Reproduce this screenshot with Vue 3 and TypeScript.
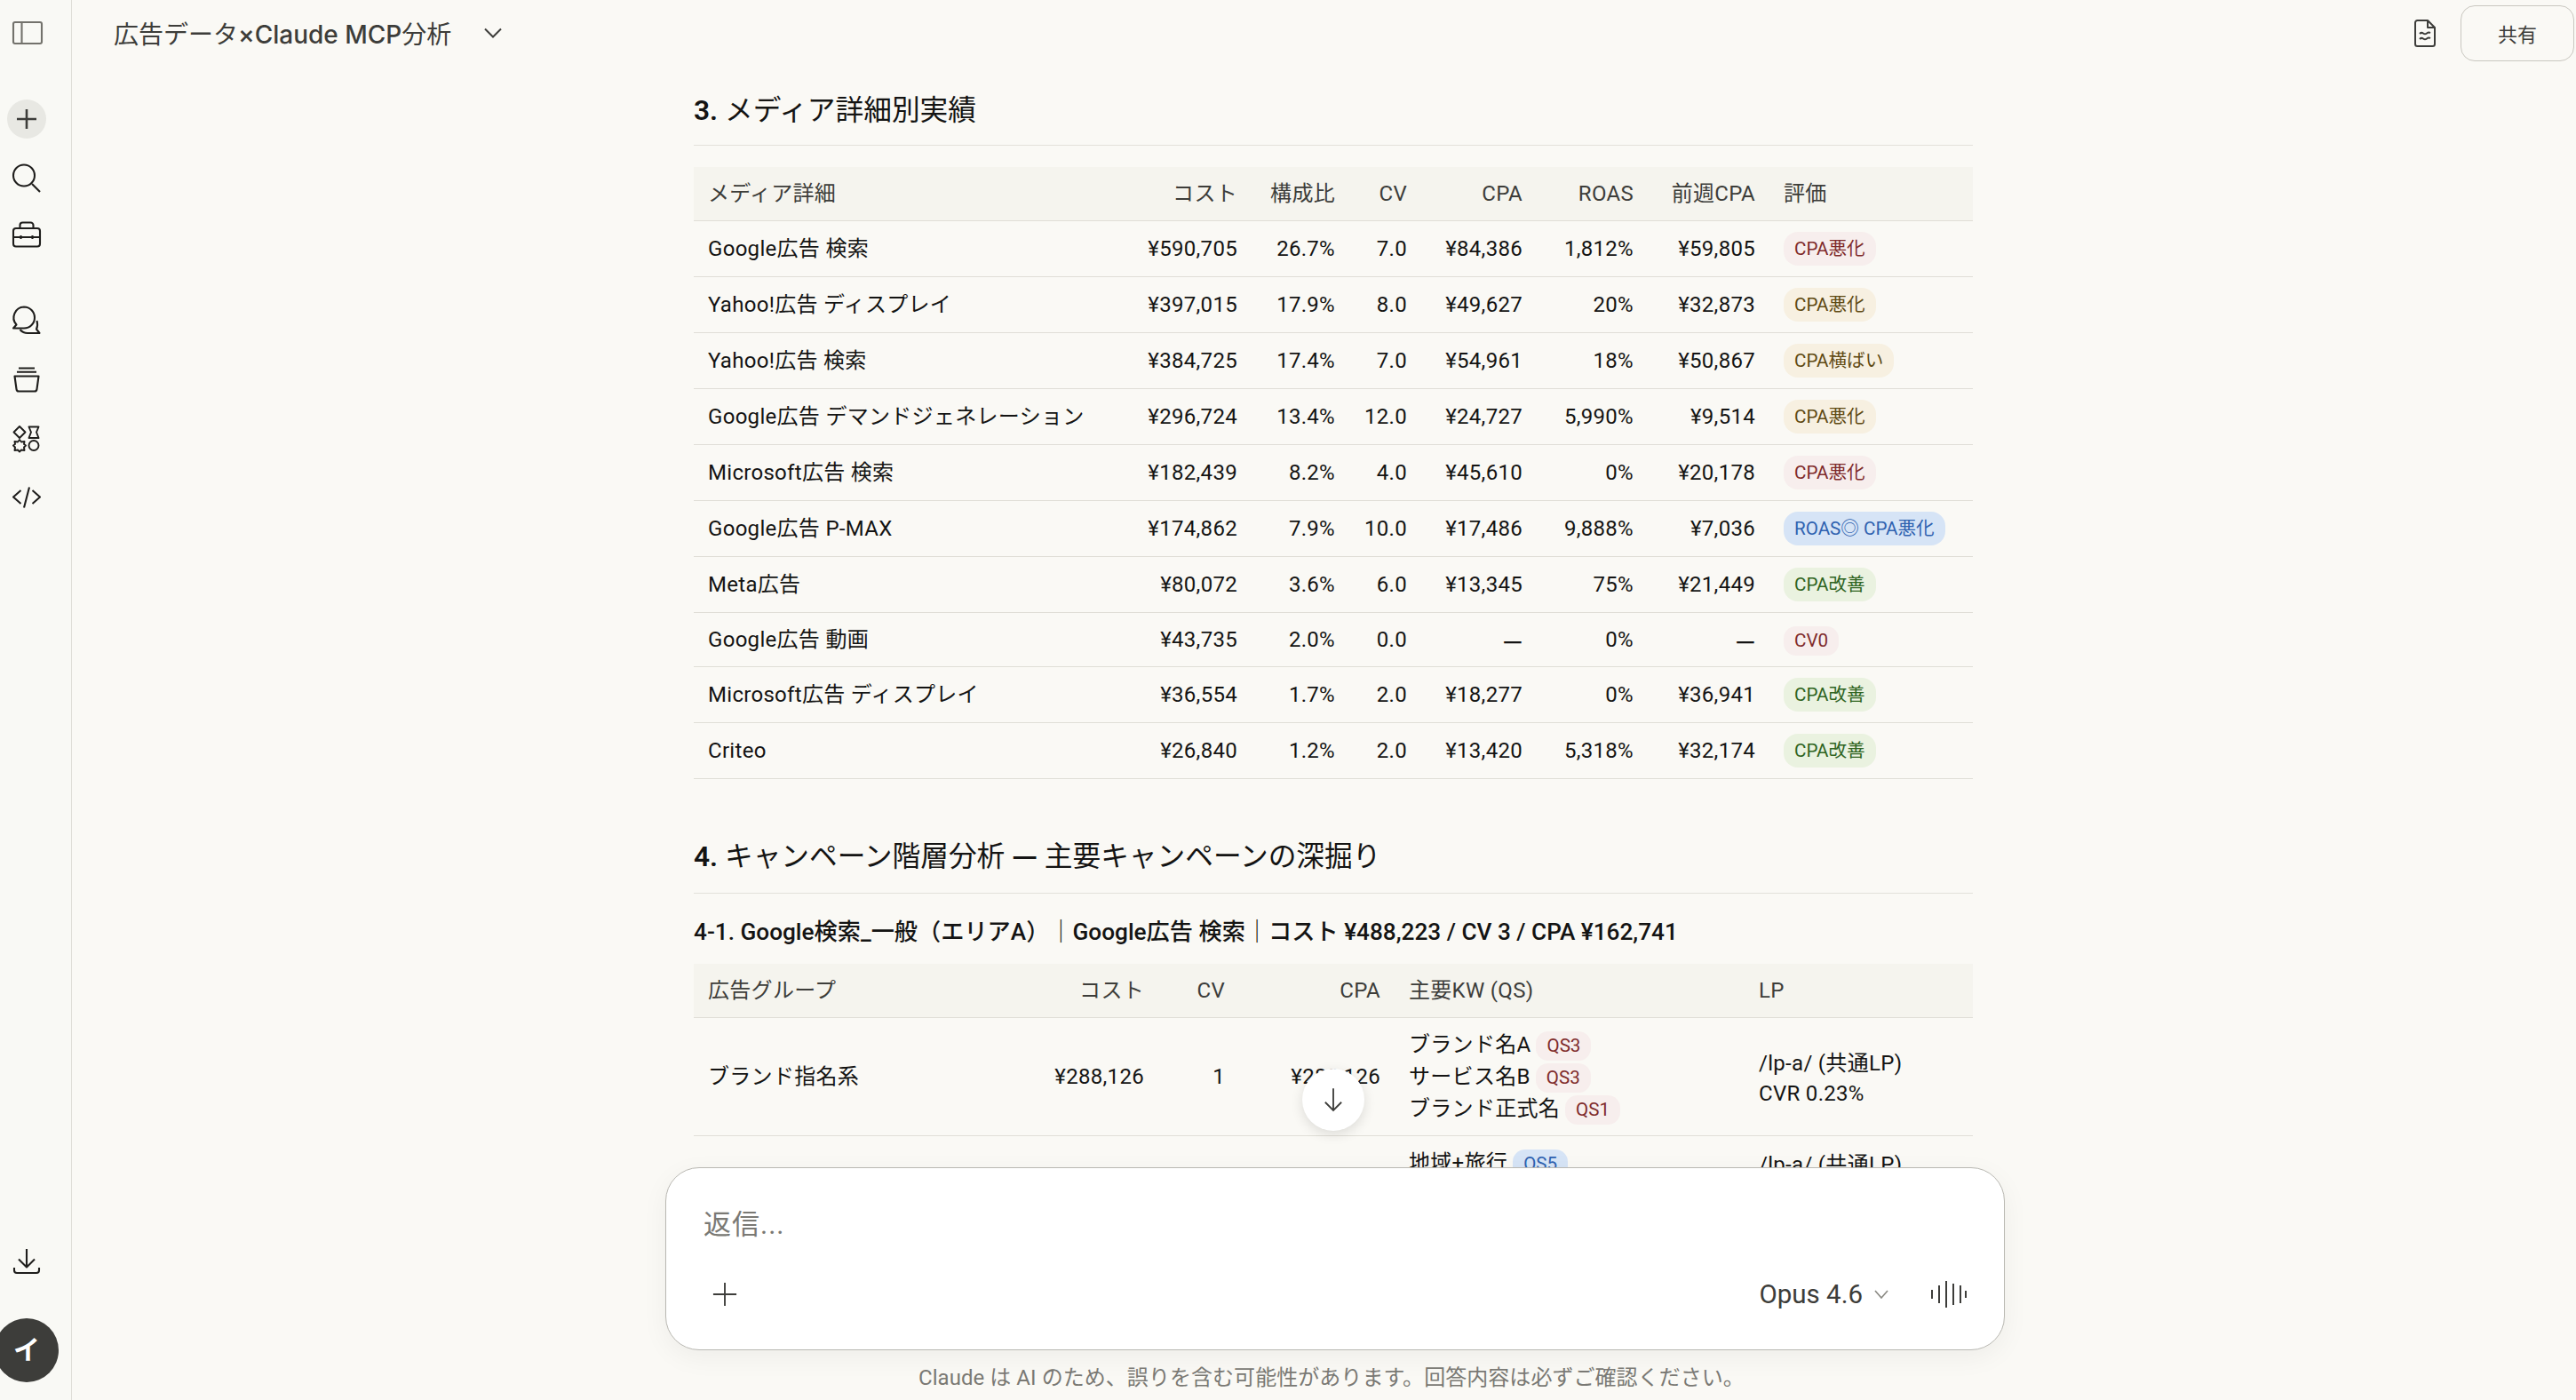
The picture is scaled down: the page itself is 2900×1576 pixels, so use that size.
<script setup lang="ts">
type Tone = 'red' | 'amber' | 'blue' | 'green'
interface MediaRow {
  name: string
  cost: string
  share: string
  cv: string
  cpa: string
  roas: string
  prev: string
  label: string
  tone: Tone
  short?: boolean
}
const rows: MediaRow[] = [
  { name: 'Google広告 検索', cost: '¥590,705', share: '26.7%', cv: '7.0', cpa: '¥84,386', roas: '1,812%', prev: '¥59,805', label: 'CPA悪化', tone: 'red' },
  { name: 'Yahoo!広告 ディスプレイ', cost: '¥397,015', share: '17.9%', cv: '8.0', cpa: '¥49,627', roas: '20%', prev: '¥32,873', label: 'CPA悪化', tone: 'amber' },
  { name: 'Yahoo!広告 検索', cost: '¥384,725', share: '17.4%', cv: '7.0', cpa: '¥54,961', roas: '18%', prev: '¥50,867', label: 'CPA横ばい', tone: 'amber' },
  { name: 'Google広告 デマンドジェネレーション', cost: '¥296,724', share: '13.4%', cv: '12.0', cpa: '¥24,727', roas: '5,990%', prev: '¥9,514', label: 'CPA悪化', tone: 'amber' },
  { name: 'Microsoft広告 検索', cost: '¥182,439', share: '8.2%', cv: '4.0', cpa: '¥45,610', roas: '0%', prev: '¥20,178', label: 'CPA悪化', tone: 'red' },
  { name: 'Google広告 P-MAX', cost: '¥174,862', share: '7.9%', cv: '10.0', cpa: '¥17,486', roas: '9,888%', prev: '¥7,036', label: 'ROAS◎ CPA悪化', tone: 'blue' },
  { name: 'Meta広告', cost: '¥80,072', share: '3.6%', cv: '6.0', cpa: '¥13,345', roas: '75%', prev: '¥21,449', label: 'CPA改善', tone: 'green' },
  { name: 'Google広告 動画', cost: '¥43,735', share: '2.0%', cv: '0.0', cpa: '—', roas: '0%', prev: '—', label: 'CV0', tone: 'red', short: true },
  { name: 'Microsoft広告 ディスプレイ', cost: '¥36,554', share: '1.7%', cv: '2.0', cpa: '¥18,277', roas: '0%', prev: '¥36,941', label: 'CPA改善', tone: 'green' },
  { name: 'Criteo', cost: '¥26,840', share: '1.2%', cv: '2.0', cpa: '¥13,420', roas: '5,318%', prev: '¥32,174', label: 'CPA改善', tone: 'green' }
]
const keywords: { kw: string; qs: string; tone: Tone }[] = [
  { kw: 'ブランド名A', qs: 'QS3', tone: 'red' },
  { kw: 'サービス名B', qs: 'QS3', tone: 'red' },
  { kw: 'ブランド正式名', qs: 'QS1', tone: 'red' }
]
</script>

<template>
  <div class="app">
    <aside class="sidebar">
      <button class="side-btn panel" type="button" aria-label="サイドバー">
        <svg viewBox="0 0 44 44" class="ico muted"><rect x="7" y="10" width="32" height="24" rx="2" /><path d="M16.5 10V34" /></svg>
      </button>
      <nav class="side-group first">
        <button class="side-btn" type="button" aria-label="新規">
          <span class="plus-disc"><svg viewBox="0 0 44 44" class="ico plus"><path d="M22 11V33M11 22H33" /></svg></span>
        </button>
        <button class="side-btn" type="button" aria-label="検索">
          <svg viewBox="0 0 44 44" class="ico"><circle cx="19" cy="20.5" r="12" /><path d="M28 30L37 39" /></svg>
        </button>
        <button class="side-btn" type="button" aria-label="ツール">
          <svg viewBox="0 0 44 44" class="ico"><rect x="7" y="15" width="30" height="20.5" rx="3" /><path d="M14.5 15V11.5A3 3 0 0 1 17.5 8.5H26.5A3 3 0 0 1 29.5 11.5V15M7 25H37M15.5 23V27M28.5 23V27" /></svg>
        </button>
      </nav>
      <nav class="side-group second">
        <button class="side-btn" type="button" aria-label="チャット">
          <svg viewBox="0 0 44 44" class="ico"><path d="M19 4.5A12 12 0 0 1 19 28.5H7L10.5 24.5A12 12 0 0 1 19 4.5Z" /><path d="M33.5 20Q35 25 33 29.5L36.5 34H23Q18 34 14.5 30" /></svg>
        </button>
        <button class="side-btn" type="button" aria-label="プロジェクト">
          <svg viewBox="0 0 44 44" class="ico"><path d="M13 8.5H31M11 12.8H33M8.5 17.5H35.5L33.5 32Q33.2 34.5 31 34.5H13Q10.8 34.5 10.5 32Z" /></svg>
        </button>
        <button class="side-btn" type="button" aria-label="アーティファクト">
          <svg viewBox="0 0 44 44" class="ico apps"><path d="M14 9L20.5 15.5L14 22L7.5 15.5Z" /><path d="M24.5 9.5H35.5L33 15.5L35.5 22H24.5L27 15.5Z" /><path d="M14 24L16 26.5L19.5 26L19 29L21 30.5L19 32.5L19.5 36L16 35.5L14 37.5L12 35.5L8.5 36L9 32.5L7 30.5L9 29L8.5 26L12 26.5Z" /><circle cx="30" cy="30.5" r="5.5" /></svg>
        </button>
        <button class="side-btn" type="button" aria-label="コード">
          <svg viewBox="0 0 44 44" class="ico"><path d="M15.5 16L7 23.5L15.5 31M28.5 16L37 23.5L28.5 31M25 12.5L19 35.5" /></svg>
        </button>
      </nav>
      <div class="side-bottom">
        <button class="side-btn" type="button" aria-label="ダウンロード">
          <svg viewBox="0 0 44 44" class="ico"><path d="M22 8V29M13 19.5L22 28.5L31 19.5M8 29V32Q8 35 11 35H33Q36 35 36 32V29" /></svg>
        </button>
        <div class="avatar">イ</div>
      </div>
    </aside>

    <main class="main">
      <header class="topbar">
        <div class="chat-title">
          <span>広告データ<span class="latin">×Claude MCP</span>分析</span>
          <svg viewBox="0 0 20 12" class="chev"><path d="M1 1.5L10 10.5L19 1.5" /></svg>
        </div>
        <div class="top-actions">
          <svg viewBox="0 0 24 31" class="doc"><path d="M3.5 1H15L23 9V27.5A2.5 2.5 0 0 1 20.5 30H3.5A2.5 2.5 0 0 1 1 27.5V3.5A2.5 2.5 0 0 1 3.5 1Z" /><path d="M15 1V9H23" /><path d="M6 16Q8 14 10 15.5T14 15.5T18 15M6 22Q8 20 10 21.5T14 21.5T18 21" /></svg>
          <button class="share" type="button">共有</button>
        </div>
      </header>

      <div class="scroll">
        <div class="thread">
          <h2 class="h2 one"><span class="num">3.</span> メディア詳細別実績</h2>
          <table class="tbl">
            <colgroup>
              <col class="m1" /><col class="m2" /><col class="m3" /><col class="m4" /><col class="m5" /><col class="m6" /><col class="m7" /><col class="m8" />
            </colgroup>
            <thead>
              <tr>
                <th>メディア詳細</th>
                <th class="r">コスト</th>
                <th class="r">構成比</th>
                <th class="r">CV</th>
                <th class="r">CPA</th>
                <th class="r">ROAS</th>
                <th class="r">前週CPA</th>
                <th>評価</th>
              </tr>
            </thead>
            <tbody>
              <tr v-for="row in rows" :key="row.name" :class="{ short: row.short }">
                <td>{{ row.name }}</td>
                <td class="r">{{ row.cost }}</td>
                <td class="r">{{ row.share }}</td>
                <td class="r">{{ row.cv }}</td>
                <td class="r" :class="{ dash: row.cpa === '—' }">{{ row.cpa }}</td>
                <td class="r">{{ row.roas }}</td>
                <td class="r" :class="{ dash: row.prev === '—' }">{{ row.prev }}</td>
                <td><span class="badge" :class="[row.tone, { low: row.short }]">{{ row.label }}</span></td>
              </tr>
            </tbody>
          </table>

          <h2 class="h2 two"><span class="num">4.</span> キャンペーン階層分析 <span class="long-dash">—</span> 主要キャンペーンの深掘り</h2>
          <h3 class="h3">4-1. Google検索_一般（エリアA）｜Google広告 検索｜コスト ¥488,223 / CV 3 / CPA ¥162,741</h3>
          <table class="tbl">
            <colgroup>
              <col class="g1" /><col class="g2" /><col class="g3" /><col class="g4" /><col class="g5" /><col class="g6" />
            </colgroup>
            <thead>
              <tr>
                <th>広告グループ</th>
                <th class="r">コスト</th>
                <th class="r">CV</th>
                <th class="r">CPA</th>
                <th>主要KW (QS)</th>
                <th>LP</th>
              </tr>
            </thead>
            <tbody>
              <tr class="tall">
                <td>ブランド指名系</td>
                <td class="r">¥288,126</td>
                <td class="r">1</td>
                <td class="r">¥288,126</td>
                <td>
                  <div v-for="k in keywords" :key="k.kw" class="kw">{{ k.kw }}<span class="badge low qs" :class="k.tone">{{ k.qs }}</span></div>
                </td>
                <td class="lp">/lp-a/ (共通LP)<br />CVR 0.23%</td>
              </tr>
              <tr class="tall">
                <td></td><td></td><td></td><td></td>
                <td class="top"><div class="kw">地域+旅行<span class="badge low qs blue">QS5</span></div></td>
                <td class="top lp-next">/lp-a/ (共通LP)</td>
              </tr>
            </tbody>
          </table>
        </div>
        <button class="to-bottom" type="button" aria-label="最下部へ">
          <svg viewBox="0 0 24 30" class="arrow"><path d="M12 1V28M2 18L12 28L22 18" /></svg>
        </button>
      </div>

      <footer class="composer">
        <div class="card">
          <div class="placeholder">返信...</div>
          <div class="card-row">
            <svg viewBox="0 0 30 30" class="add"><path d="M15 1V29M1 15H29" /></svg>
            <div class="model">
              <span>Opus 4.6</span>
              <svg viewBox="0 0 16 10" class="model-chev"><path d="M1 1L8 9L15 1" /></svg>
              <svg viewBox="0 0 40 30" class="voice"><path d="M1 10V20M9 5V25M17 0V30M25 3V27M33 5V25M39 11V19" /></svg>
            </div>
          </div>
        </div>
        <p class="note">Claude は AI のため、誤りを含む可能性があります。回答内容は必ずご確認ください。</p>
      </footer>
    </main>
  </div>
</template>

<style>
html,
body {
  margin: 0;
  padding: 0;
  background: #faf9f5;
}
</style>

<style scoped>
.app {
  display: flex;
  width: 2900px;
  height: 1576px;
  overflow: hidden;
  background: #faf9f5;
  color: #141413;
  font-family: Roboto, 'Noto Sans CJK JP', sans-serif;
}

button {
  padding: 0;
  border: 0;
  background: none;
  font: inherit;
  color: inherit;
}

/* Sidebar */
.sidebar {
  flex: 0 0 81px;
  width: 81px;
  min-width: 0;
  overflow: hidden;
  box-sizing: border-box;
  display: flex;
  flex-direction: column;
  align-items: center;
  padding: 5px 20px 20px 0;
  background: #f9f9f5;
  border-right: 1px solid #dfded8;
}
.side-btn {
  flex: 0 0 65px;
  width: 60px;
  height: 65px;
  display: flex;
  align-items: center;
  justify-content: center;
}
.side-btn.panel {
  height: 64px;
  flex-basis: 64px;
}
.side-group {
  display: flex;
  flex-direction: column;
}
.side-group.first {
  margin-top: 32px;
}
.side-group.second {
  margin-top: 34px;
}
.side-bottom {
  margin-top: auto;
  display: flex;
  flex-direction: column;
  align-items: center;
  gap: 32px;
}
.ico {
  width: 44px;
  height: 44px;
  fill: none;
  stroke: #1f1e1c;
  stroke-width: 2.1;
  stroke-linejoin: round;
}
.ico.muted {
  stroke: #73726c;
}
.ico.plus {
  stroke: #3d3d3a;
  stroke-width: 2.6;
}
.ico.apps {
  stroke-width: 1.9;
}
.plus-disc {
  width: 44px;
  height: 44px;
  border-radius: 50%;
  background: #e8e8e3;
  display: flex;
}
.avatar {
  flex: none;
  width: 72px;
  height: 72px;
  border-radius: 50%;
  background: #3d3d3a;
  color: #fff;
  font-size: 30px;
  font-weight: 700;
  line-height: 72px;
  text-align: center;
}

/* Main column */
.main {
  flex: 1;
  min-width: 0;
  display: flex;
  flex-direction: column;
}
.topbar {
  flex: 0 0 76px;
  box-sizing: border-box;
  display: flex;
  align-items: center;
  justify-content: space-between;
  padding: 0 2px 2px 47px;
}
.chat-title {
  display: flex;
  align-items: center;
  gap: 37px;
  font-family: Inter, 'Noto Sans CJK JP', sans-serif;
  font-size: 28px;
  color: #3d3d3a;
}
.latin {
  font-weight: 500;
}
.chev {
  width: 20px;
  height: 12px;
  fill: none;
  stroke: #3d3d3a;
  stroke-width: 2;
}
.top-actions {
  display: flex;
  align-items: center;
  gap: 28px;
}
.doc {
  width: 24px;
  height: 31px;
  fill: none;
  stroke: #3d3d3a;
  stroke-width: 2;
  stroke-linejoin: round;
}
.share {
  width: 128px;
  height: 63px;
  box-sizing: border-box;
  border: 1.5px solid #c9c7c0;
  border-radius: 16px;
  font-size: 22px;
  color: #3d3d3a;
}

.scroll {
  position: relative;
  flex: 1;
  min-height: 0;
  overflow: hidden;
}
.thread {
  width: 1440px;
  margin-left: 700px;
  font-size: 24px;
  line-height: 36px;
}
.h2 {
  margin: 0;
  height: 44px;
  box-sizing: content-box;
  border-bottom: 1px solid #e3e1da;
  font-size: 31.7px;
  font-weight: 400;
  line-height: 44px;
  color: #141413;
}
.num {
  font-weight: 600;
}
.long-dash {
  font-family: 'Noto Sans CJK JP', sans-serif;
  font-weight: 700;
  line-height: 1;
}
.h2.one {
  margin-top: 24px;
  margin-bottom: 24px;
  padding: 3px 0 16px;
}
.h2.two {
  margin-top: 65px;
  padding: 1px 0 18px;
}
.h3 {
  margin: 24px 0 17px;
  font-size: 26.2px;
  font-weight: 500;
  line-height: 38px;
  color: #141413;
  white-space: nowrap;
}

.tbl {
  width: 1440px;
  table-layout: fixed;
  border-collapse: separate;
  border-spacing: 0;
  letter-spacing: 0.3px;
}
.tbl th,
.tbl td {
  box-sizing: border-box;
  padding: 0 16px;
  border-bottom: 1px solid #e0ded7;
  text-align: left;
  white-space: nowrap;
}
.tbl th {
  height: 61px;
  background: #f5f4ee;
  font-weight: 400;
  color: #3d3d3a;
}
.tbl td {
  height: 63px;
}
.tbl td.dash {
  font-family: 'Noto Sans CJK JP', sans-serif;
  font-weight: 700;
}
.tbl .r {
  text-align: right;
}
.tbl tr.short td {
  height: 61px;
}
.tbl tr.tall td {
  height: 133px;
}
.tbl td.top {
  vertical-align: top;
  padding-top: 12px;
}
.tbl td.lp {
  line-height: 34px;
  padding-top: 4px;
}
.tbl td.lp-next {
  padding-top: 14px;
}
.m1 { width: 470px; }
.m2 { width: 158px; }
.m3 { width: 110px; }
.m4 { width: 81px; }
.m5 { width: 130px; }
.m6 { width: 125px; }
.m7 { width: 137px; }
.m8 { width: 229px; }
.g1 { width: 340px; }
.g2 { width: 183px; }
.g3 { width: 91px; }
.g4 { width: 175px; }
.g5 { width: 394px; }
.g6 { width: 257px; }

.badge {
  display: inline-block;
  height: 38px;
  padding: 0 12px;
  border-radius: 16px;
  font-size: 20.6px;
  letter-spacing: 0;
  line-height: 38px;
  vertical-align: middle;
  white-space: nowrap;
}
.badge.low {
  height: 33px;
  line-height: 33px;
  border-radius: 14px;
}
.badge.qs {
  margin-left: 6px;
}
.red { background: #f7eeed; color: #7f2b2b; }
.amber { background: #f7f0e1; color: #5f4a13; }
.blue { background: #d6e4f6; color: #2f62b0; }
.green { background: #eaf2e0; color: #2f641f; }
.kw {
  height: 36px;
  line-height: 36px;
}

.to-bottom {
  position: absolute;
  left: 1385px;
  top: 1127px;
  width: 70px;
  height: 70px;
  border-radius: 50%;
  background: #fff;
  box-shadow: 0 4px 14px rgba(0, 0, 0, 0.12);
  display: flex;
  align-items: center;
  justify-content: center;
}
.arrow {
  width: 22px;
  height: 28px;
  fill: none;
  stroke: #3d3d3a;
  stroke-width: 2;
}

/* Composer */
.composer {
  flex: none;
  position: relative;
  padding-left: 668px;
}
.card {
  box-sizing: border-box;
  width: 1508px;
  height: 206px;
  padding: 45px 42px 0 42px;
  background: #fff;
  border: 1.5px solid #b9b8b2;
  border-radius: 38px;
  box-shadow: 0 8px 30px rgba(0, 0, 0, 0.05);
  display: flex;
  flex-direction: column;
}
.placeholder {
  font-size: 31px;
  letter-spacing: 1px;
  line-height: 38px;
  color: #7a7974;
}
.card-row {
  margin-top: 37px;
  height: 44px;
  display: flex;
  align-items: center;
  justify-content: space-between;
}
.add {
  width: 28px;
  height: 28px;
  margin-left: 10px;
  fill: none;
  stroke: #3d3d3a;
  stroke-width: 2;
}
.model {
  display: flex;
  align-items: center;
  font-size: 29.5px;
  color: #3d3d3a;
}
.model-chev {
  width: 16px;
  height: 10px;
  margin-left: 13px;
  fill: none;
  stroke: #8a8983;
  stroke-width: 1.6;
}
.voice {
  width: 40px;
  height: 30px;
  margin-left: 48px;
  fill: none;
  stroke: #3d3d3a;
  stroke-width: 2;
}
.note {
  margin: 0 0 0 285px;
  height: 56px;
  font-size: 24px;
  letter-spacing: 0.05px;
  line-height: 62px;
  color: #7a7974;
  white-space: nowrap;
}
</style>
